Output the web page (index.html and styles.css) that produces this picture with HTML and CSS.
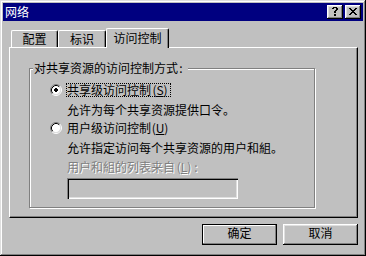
FILE: index.html
```html
<!DOCTYPE html>
<html>
	<head>
		<meta charset="utf-8" />
		<title>网络</title>
		<link rel="stylesheet" href="styles.css">
	</head>
	<body>
		<div class="window">
			<div class="titlebar">
				<span class="title">网络</span>
				<div class="caption-btns">
					<div class="cap-btn">
						<svg class="cap-help" width="6" height="9" viewBox="0 0 6 9" shape-rendering="crispEdges"><path d="M1 0h4v1H1z M0 1h2v1H0z M4 1h2v1H4z M4 2h2v1H4z M3 3h2v1H3z M2 4h2v2H2z M2 7h2v2H2z" fill="#000"/></svg>
					</div>
					<div class="cap-btn">
						<svg class="cap-close" width="8" height="7" viewBox="0 0 8 7" shape-rendering="crispEdges"><path d="M0 0h2v1H0z M6 0h2v1H6z M1 1h2v1H1z M5 1h2v1H5z M2 2h4v1H2z M3 3h2v1H3z M2 4h4v1H2z M1 5h2v1H1z M5 5h2v1H5z M0 6h2v1H0z M6 6h2v1H6z" fill="#000"/></svg>
					</div>
				</div>
			</div>
			<div class="tabs">
				<div class="tab tab1">配置</div>
				<div class="tab tab2">标识</div>
				<div class="tab tab3 active">访问控制</div>
			</div>
			<div class="panel">
				<div class="group">
					<div class="group-title">对共享资源的访问控制方式<span class="half">:</span></div>
					<div class="option first">
						<svg class="radio" width="12" height="12" viewBox="0 0 12 12">
							<circle cx="6" cy="6" r="4.5" fill="#fff"/>
							<path d="M2.11 9.89A5.5 5.5 0 0 1 9.89 2.11" fill="none" stroke="#808080"/>
							<path d="M9.89 2.11A5.5 5.5 0 0 1 2.11 9.89" fill="none" stroke="#fff"/>
							<path d="M2.82 9.18A4.5 4.5 0 0 1 9.18 2.82" fill="none" stroke="#000"/>
							<path d="M9.18 2.82A4.5 4.5 0 0 1 2.82 9.18" fill="none" stroke="#dfdfdf"/>
							<path d="M5 4h2v1h1v2H7v1H5V7H4V5h1z" fill="#000" shape-rendering="crispEdges"/>
						</svg>
						<span class="label focus">共享级访问控制<span class="key">(<u>S</u>)</span></span>
					</div>
					<div class="desc">允许为每个共享资源提供口令。</div>
					<div class="option">
						<svg class="radio" width="12" height="12" viewBox="0 0 12 12">
							<circle cx="6" cy="6" r="4.5" fill="#fff"/>
							<path d="M2.11 9.89A5.5 5.5 0 0 1 9.89 2.11" fill="none" stroke="#808080"/>
							<path d="M9.89 2.11A5.5 5.5 0 0 1 2.11 9.89" fill="none" stroke="#fff"/>
							<path d="M2.82 9.18A4.5 4.5 0 0 1 9.18 2.82" fill="none" stroke="#000"/>
							<path d="M9.18 2.82A4.5 4.5 0 0 1 2.82 9.18" fill="none" stroke="#dfdfdf"/>
						</svg>
						<span class="label">用户级访问控制<span class="key">(<u>U</u>)</span></span>
					</div>
					<div class="desc">允许指定访问每个共享资源的用户和組。</div>
					<div class="desc disabled">用户和組的列表来自<span class="key">(<u>L</u>)</span><span class="half">:</span></div>
					<div class="textbox"></div>
				</div>
			</div>
			<div class="buttons">
				<div class="btn default">确定</div>
				<div class="btn">取消</div>
			</div>
		</div>
	</body>
</html>
```
FILE: styles.css
```css
html,body{
	margin: 0;
	padding: 0;
}
body{
	background: #c0c0c0;
	font-family: "Noto Sans CJK SC", "Liberation Sans", sans-serif;
	font-size: 12px;
	color: #000;
}
.window{
	width: 366px;
	height: 256px;
	box-sizing: border-box;
	padding: 3px;
	background: #c0c0c0;
	box-shadow: inset -1px -1px #000, inset 1px 1px #dfdfdf, inset -2px -2px #808080, inset 2px 2px #fff;
}
.titlebar{
	height: 18px;
	background: #000080;
	color: #fff;
	display: flex;
	align-items: center;
	justify-content: space-between;
	padding: 0 2px;
}
.title{
	line-height: 18px;
}
.caption-btns{
	display: flex;
	gap: 2px;
}
.cap-btn{
	width: 16px;
	height: 14px;
	box-sizing: border-box;
	background: #c0c0c0;
	box-shadow: inset -1px -1px #000, inset 1px 1px #fff, inset -2px -2px #808080, inset 2px 2px #dfdfdf;
	display: flex;
	align-items: center;
	justify-content: center;
}
.cap-btn svg{
	display: block;
}
.cap-help{
	margin: 0 1px 1px 0;
}
.cap-close{
	margin: 0 1px 1px 0;
}
.tabs{
	display: flex;
	align-items: flex-end;
	height: 19px;
	margin-top: 7px;
	padding-left: 8px;
}
.tab{
	height: 17px;
	box-sizing: border-box;
	border-top: 1px solid #fff;
	border-left: 1px solid #fff;
	border-right: 1px solid #000;
	border-radius: 2px 2px 0 0;
	box-shadow: inset -1px 0 #808080;
	text-align: center;
	line-height: 16px;
	background: #c0c0c0;
}
.tab1{ width: 47px; }
.tab2{ width: 48px; }
.tab3{ width: 63px; }
.tab.active{
	height: 20px;
	margin-bottom: -1px;
	position: relative;
	z-index: 1;
	line-height: 17px;
	padding-bottom: 2px;
}
.panel{
	margin: 0 5px 0 6px;
	height: 171px;
	box-sizing: border-box;
	border-top: 1px solid #fff;
	border-left: 1px solid #fff;
	border-right: 1px solid #000;
	border-bottom: 1px solid #000;
	box-shadow: inset -1px -1px #808080;
	padding: 20px 0 0 19px;
}
.group{
	width: 286px;
	height: 140px;
	box-sizing: border-box;
	border: 1px solid #808080;
	box-shadow: 1px 1px 0 #fff, inset 1px 1px 0 #fff;
}
.group-title{
	width: fit-content;
	height: 12px;
	line-height: 12px;
	margin: -7px 0 0 3px;
	padding: 0 4px 0 1px;
	background: #c0c0c0;
	white-space: nowrap;
}
/* half-width cells like the bitmap font */
.half{
	display: inline-block;
	width: 6px;
	text-align: center;
}
.key{
	display: inline-block;
	width: 18px;
	text-align: center;
}
.option{
	display: flex;
	align-items: center;
	height: 18px;
	padding-left: 20px;
}
.option.first{
	margin-top: 7px;
}
.radio{
	display: block;
	flex: none;
}
.label{
	margin-left: 5px;
	height: 12px;
	line-height: 12px;
	white-space: nowrap;
}
.label.focus{
	outline: 1px dotted #000;
	padding-right: 1px;
}
.desc{
	height: 18px;
	line-height: 18px;
	margin-top: 2px;
	padding-left: 37px;
	white-space: nowrap;
}
.desc.disabled{
	margin-top: 1px;
	color: #808080;
	text-shadow: 1px 1px 0 #fff;
}
.textbox{
	width: 171px;
	height: 21px;
	margin: 2px 0 0 37px;
	box-sizing: border-box;
	background: #c0c0c0;
	box-shadow: inset 1px 1px #808080, inset 2px 2px #000, inset -1px -1px #fff, inset -2px -2px #dfdfdf;
}
.buttons{
	display: flex;
	justify-content: flex-end;
	gap: 6px;
	margin: 6px 5px 0 0;
}
.btn{
	width: 75px;
	height: 21px;
	box-sizing: border-box;
	text-align: center;
	line-height: 18px;
	box-shadow: inset -1px -1px #000, inset 1px 1px #fff, inset -2px -2px #808080, inset 2px 2px #dfdfdf;
}
.btn.default{
	border: 1px solid #000;
	line-height: 16px;
	box-shadow: inset -1px -1px #808080, inset 1px 1px #fff;
}
```
